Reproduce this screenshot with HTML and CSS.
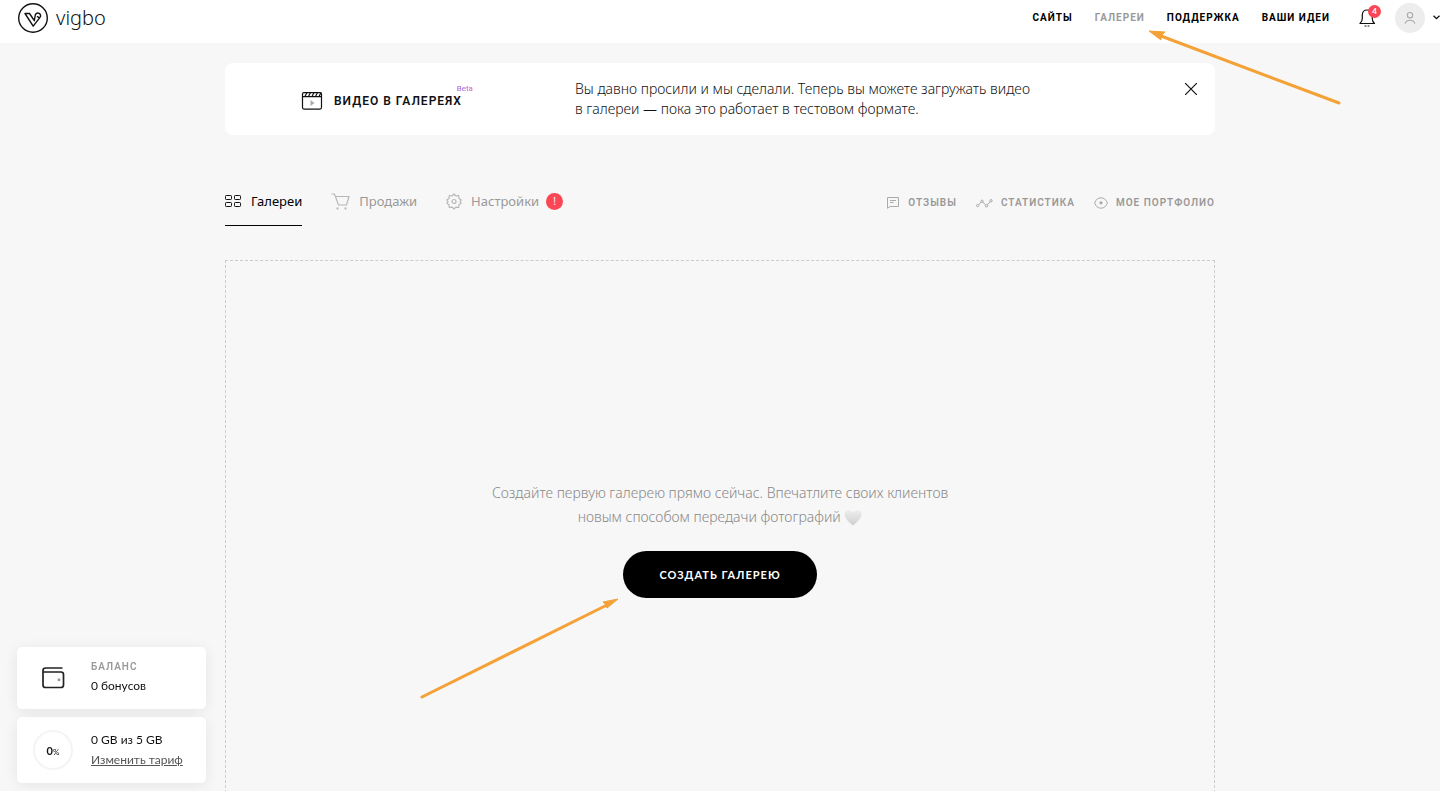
FILE: index.html
```html
<!DOCTYPE html>
<html lang="ru">
<head>
<meta charset="utf-8">
<meta name="viewport" content="width=device-width, initial-scale=1">
<title>vigbo — Галереи</title>
<link rel="stylesheet" href="styles.css">
</head>
<body>
<header class="topbar">
  <a class="logo" href="#">
    <svg class="logo-mark" width="32" height="32" viewBox="0 0 32 32" fill="none" stroke="#111" stroke-width="1.400" stroke-linejoin="round" stroke-linecap="round" aria-hidden="true">
      <circle cx="16" cy="16" r="14.3"/>
      <path d="M8 11.500h4.500l4.800 7.200M8 11.500 16.200 24.200 22.600 15.800M17.300 18.700l.9-5.200a2.700 2.700 0 1 1 4.400 2.300l-2.200-1.100"/>
    </svg>
    <span class="logo-name">vigbo</span>
  </a>
  <nav class="topnav">
    <a href="#">Сайты</a>
    <a class="current" href="#">Галереи</a>
    <a href="#">Поддержка</a>
    <a href="#">Ваши идеи</a>
  </nav>
  <button class="bell" type="button" aria-label="Уведомления">
    <svg width="17" height="20" viewBox="0 0 17 20" fill="none" stroke="#111" stroke-width="1.200" stroke-linejoin="round" stroke-linecap="round" aria-hidden="true">
      <path d="M1 15.500h14.500c-1.600-1.400-2.200-2.600-2.200-5V7c0-3-2-5-5-5s-5 2-5 5v3.500c0 2.400-.8 3.600-2.300 5zM6 18h1M9 18h1"/>
    </svg>
    <span class="bell-count">4</span>
  </button>
  <button class="account" type="button" aria-label="Профиль">
    <span class="avatar">
      <svg width="12" height="14" viewBox="0 0 12 14" fill="none" stroke="#aaa" stroke-width="1.100" stroke-linecap="round" aria-hidden="true">
        <circle cx="6" cy="4.200" r="2.700"/><path d="M1.200 12.300C2 10 3.800 9.200 6 9.200s4 .8 4.800 3.100"/>
      </svg>
    </span>
    <svg class="chevron" width="7" height="5" viewBox="0 0 7 5" fill="none" stroke="#111" stroke-width="1.300" aria-hidden="true"><path d="M.5.7 3.500 3.700 6.500.7"/></svg>
  </button>
  <svg class="arrow arrow-nav" width="192" height="74" viewBox="0 0 192 74" aria-hidden="true">
    <path d="M12 5 190 72" stroke="#f4a137" stroke-width="3" stroke-linecap="round"/>
    <path d="M0 0 16 1 12 5 12 9z" fill="#f4a137" stroke="#f4a137"/>
  </svg>
</header>

<main class="page">
  <section class="banner">
    <h2 class="banner-title">
      <svg width="22" height="18" viewBox="0 0 22 18" fill="none" stroke="#111" stroke-width="1.200" aria-hidden="true">
        <rect x="1.500" y=".6" width="19" height="16.500" rx="1.500"/>
        <path d="M1.500 4.600h19M4 4.600l2-4M7.500 4.600l2-4M11 4.600l2-4M14.500 4.600l2-4M18 4.600l2-4"/>
        <path d="M9.500 8v6l4-3z" fill="#aaa" stroke="none"/>
      </svg>
      <span class="banner-name">Видео в галереях<sup class="beta">Beta</sup></span>
    </h2>
    <p class="banner-text">Вы давно просили и мы сделали. Теперь вы можете загружать видео<br>в галереи — пока это работает в тестовом формате.</p>
    <button class="close" type="button" aria-label="Закрыть">
      <svg width="12" height="12" viewBox="0 0 12 12" stroke="#111" stroke-width="1.200" aria-hidden="true"><path d="M0 0 12 12M12 0 0 12"/></svg>
    </button>
  </section>

  <div class="toolbar">
    <nav class="tabs">
      <a class="tab active" href="#">
        <svg width="17" height="13" viewBox="0 0 17 13" fill="none" stroke="#111" aria-hidden="true"><rect x=".5" y=".5" width="6" height="4" rx=".8"/><rect x="9.500" y=".5" width="6" height="4" rx=".8"/><rect x=".5" y="7.500" width="6" height="4" rx=".8"/><rect x="9.500" y="7.500" width="6" height="4" rx=".8"/></svg>
        Галереи</a>
      <a class="tab" href="#">
        <svg width="19" height="17" viewBox="0 0 19 17" fill="none" stroke="#b8b8b8" stroke-width="1.200" aria-hidden="true"><path d="M.5 1h3l4 11h8L18 3.500H4.500"/><path d="M6.500 14.500v2M14.500 14.500v2" stroke-width="2"/></svg>
        Продажи</a>
      <a class="tab" href="#">
        <svg width="16" height="17" viewBox="0 0 16 17" fill="none" stroke="#b8b8b8" stroke-width="1.200" stroke-linejoin="round" aria-hidden="true"><path d="M8 1l1.800 1.900 2.900-.4.3 2.900L15.200 7 14 8.500l1.200 1.800-2.200 1.400-.3 2.800-2.900-.3L8 16l-1.800-1.800-2.900.3-.3-2.800L.8 10.300 2 8.500.8 7 3 5.400l.3-2.900 2.900.4z"/><circle cx="8" cy="8.500" r="2"/></svg>
        Настройки
        <span class="alert">!</span></a>
    </nav>
    <nav class="links">
      <a href="#">
        <svg width="13" height="12" viewBox="0 0 13 12" fill="none" stroke="#aaa" aria-hidden="true"><path d="M.5 11.300V.5h11v9H3zM3 3.500h6M3 5.500h3.500"/></svg>
        Отзывы</a>
      <a href="#">
        <svg width="17" height="9" viewBox="0 0 17 9" fill="none" stroke="#aaa" aria-hidden="true"><circle cx="1.700" cy="6.500" r="1.200"/><circle cx="6" cy="2.300" r="1.200"/><circle cx="10.500" cy="6.800" r="1.200"/><circle cx="15" cy="1.800" r="1.200"/><path d="M2.600 5.600 5.100 3.200M6.800 3.200l2.900 2.700M11.300 5.900l2.900-3.200"/></svg>
        Статистика</a>
      <a href="#">
        <svg width="14" height="12" viewBox="0 0 14 12" fill="none" stroke="#aaa" aria-hidden="true"><path d="M.6 6C2 2.500 4 .8 7 .8S12 2.500 13.400 6C12 9.500 10 11.200 7 11.200S2 9.500.6 6z"/><circle cx="7" cy="5.800" r="1.600" fill="#aaa" stroke="none"/></svg>
        Мое портфолио</a>
    </nav>
  </div>

  <section class="empty">
    <p class="empty-text">Создайте первую галерею прямо сейчас. Впечатлите своих клиентов<br>новым способом передачи фотографий
      <svg class="heart" width="18" height="16" viewBox="0 0 18 16" aria-hidden="true"><defs><linearGradient id="heartFill" x1="0" y1="0" x2="0" y2="1"><stop offset="0" stop-color="#ededed"/><stop offset="1" stop-color="#cfcfcf"/></linearGradient></defs><path d="M9 15.800C5 12 .5 8.500.5 4.300.5 1.800 2.200.3 4.500.3 6.500.3 8 1.300 9 3c1-1.700 2.500-2.700 4.500-2.700 2.300 0 4 1.500 4 4C17.500 8.500 13 12 9 15.800z" fill="url(#heartFill)"/></svg></p>
    <button class="create" type="button">Создать галерею</button>
    <svg class="arrow arrow-create" width="200" height="102" viewBox="0 0 200 102" aria-hidden="true">
      <path d="M3 99 188 7" stroke="#f4a137" stroke-width="3" stroke-linecap="round"/>
      <path d="M199 1 184 4 187 7 188 10z" fill="#f4a137" stroke="#f4a137"/>
    </svg>
  </section>
</main>

<aside class="widgets">
  <section class="widget">
    <div class="widget-icon">
      <svg width="23" height="22" viewBox="0 0 23 22" fill="none" stroke="#222" stroke-width="1.700" aria-hidden="true"><path d="M20.500 1H3.500Q1 1 1 3.500V18q0 2.500 2.500 2.500H19q2.500 0 2.500-2.500V7.500Q21.500 5 19 5H1"/><circle cx="17" cy="12.700" r="1.500" fill="#999" stroke="none"/></svg>
    </div>
    <div class="widget-body">
      <h3 class="widget-title">Баланс</h3>
      <p>0 бонусов</p>
    </div>
  </section>
  <section class="widget storage">
    <div class="widget-icon"><span class="gauge">0<small>%</small></span></div>
    <div class="widget-body">
      <p>0 GB из 5 GB</p>
      <a href="#">Изменить тариф</a>
    </div>
  </section>
</aside>
</body>
</html>
```
FILE: styles.css
```css
* { box-sizing: border-box; }
html { scrollbar-width: none; }
body {
  margin: 0;
  background: #f7f7f7;
  color: #111;
  font-family: Lato, "Open Sans", sans-serif;
  font-size: 14px;
}
a { color: inherit; text-decoration: none; }
button { padding: 0; border: 0; background: none; font: inherit; color: inherit; cursor: pointer; }
h2, h3, p { margin: 0; }
svg { display: block; flex: none; }

.topbar {
  position: relative;
  display: flex;
  align-items: center;
  height: 43px;
  padding: 0 0 8px 17px;
  background: #fff;
}
.logo { display: flex; align-items: center; gap: 7px; margin-right: auto; }
.logo-name { font: 300 20px/28px "Noto Sans", sans-serif; }
.topnav { display: flex; gap: 22px; margin-right: 29px; padding-top: 1px; font-family: Roboto, sans-serif; }
.topnav a { font-size: 10px; font-weight: 700; line-height: 20px; letter-spacing: 1px; text-transform: uppercase; color: #000; }
.topnav .current { color: #999; }
.bell { position: relative; width: 17px; margin-right: 19px; }
.bell-count {
  position: absolute;
  top: -3px;
  left: 9px;
  width: 13px;
  height: 13px;
  border-radius: 50%;
  background: #fa4655;
  color: #fff;
  font-size: 8px;
  font-weight: 700;
  line-height: 13px;
  text-align: center;
}
.account { display: flex; align-items: center; gap: 8px; }
.avatar { display: grid; place-items: center; width: 30px; height: 30px; border-radius: 50%; background: #ededed; }

.arrow { position: absolute; z-index: 2; overflow: visible; fill: none; pointer-events: none; }
.arrow-nav { top: 31px; right: 99px; }
.arrow-create { right: calc(50% + 101px); top: 337px; }

.page { max-width: 990px; margin: 0 auto; padding: 20px 0 0; }

.banner { display: flex; align-items: flex-start; padding: 16px 18px 16px 76px; border-radius: 8px; background: #fff; }
.banner-title { display: flex; align-items: center; gap: 11px; width: 274px; padding-top: 12px; }
.banner-name { position: relative; font-family: Roboto, sans-serif; font-size: 12px; font-weight: 600; line-height: 20px; letter-spacing: 1px; text-transform: uppercase; }
.beta {
  position: absolute;
  right: -11px;
  top: -8px;
  background: linear-gradient(90deg, #7a5cf0, #e0559a);
  -webkit-background-clip: text;
  background-clip: text;
  color: transparent;
  font-size: 8px;
  font-weight: 400;
  line-height: 12px;
  letter-spacing: 0;
  text-transform: none;
}
.banner-text { font-family: "Noto Sans", sans-serif; font-weight: 300; font-size: 14px; line-height: 20px; }
.close { margin: 4px 0 0 auto; }

.toolbar { display: flex; justify-content: space-between; align-items: flex-start; margin: 56px 0 34px; }
.tabs { display: flex; gap: 29px; }
.tab { display: flex; align-items: center; gap: 9px; height: 35px; padding-bottom: 14px; font-family: "Noto Sans", sans-serif; font-size: 13px; line-height: 20px; color: #999; border-bottom: 1px solid transparent; }
.tab.active { color: #000; border-color: #000; }
.alert { width: 17px; height: 17px; border-radius: 50%; background: #fa4655; color: #fff; font-size: 10px; line-height: 17px; text-align: center; margin-left: -2px; }
.links { display: flex; gap: 19px; font-family: Roboto, sans-serif; }
.links a { display: flex; align-items: center; gap: 8px; font-size: 10px; font-weight: 600; line-height: 24px; letter-spacing: 1px; text-transform: uppercase; color: #999; }

.empty {
  position: relative;
  display: flex;
  flex-direction: column;
  align-items: center;
  justify-content: center;
  gap: 22px;
  min-height: 558px;
  border: 1px dashed #ccc;
}
.empty-text { font-family: "Noto Sans", sans-serif; font-weight: 300; font-size: 14px; line-height: 24px; text-align: center; color: #888; }
.heart { display: inline-block; vertical-align: -4px; }
.create { height: 47px; padding: 0 36px; border-radius: 24px; background: #000; color: #fff; font-size: 11px; font-weight: 700; letter-spacing: 1px; text-transform: uppercase; }

.widgets { position: fixed; left: 17px; bottom: 8px; display: grid; gap: 8px; width: 189px; }
.widget { display: flex; align-items: center; gap: 18px; padding: 11px 16px; border-radius: 5px; background: #fff; box-shadow: 0 2px 14px rgba(0, 0, 0, .08); font-size: 12px; line-height: 20px; }
.widget-title { font-family: Roboto, sans-serif; font-size: 10px; font-weight: 600; line-height: 18px; letter-spacing: 1px; text-transform: uppercase; color: #999; }
.widget-body { padding-bottom: 2px; }
.storage { padding: 13px 16px; }
.storage .widget-body { padding: 0; }
.widget-icon { display: grid; place-items: center; width: 40px; }
.widget a { color: #555; text-decoration: underline; }
.gauge { width: 40px; height: 40px; border: 2px solid #f4f4f4; border-radius: 50%; font-size: 11px; font-weight: 700; line-height: 38px; text-align: center; }
.gauge small { font-size: 8px; font-weight: 400; }
```
